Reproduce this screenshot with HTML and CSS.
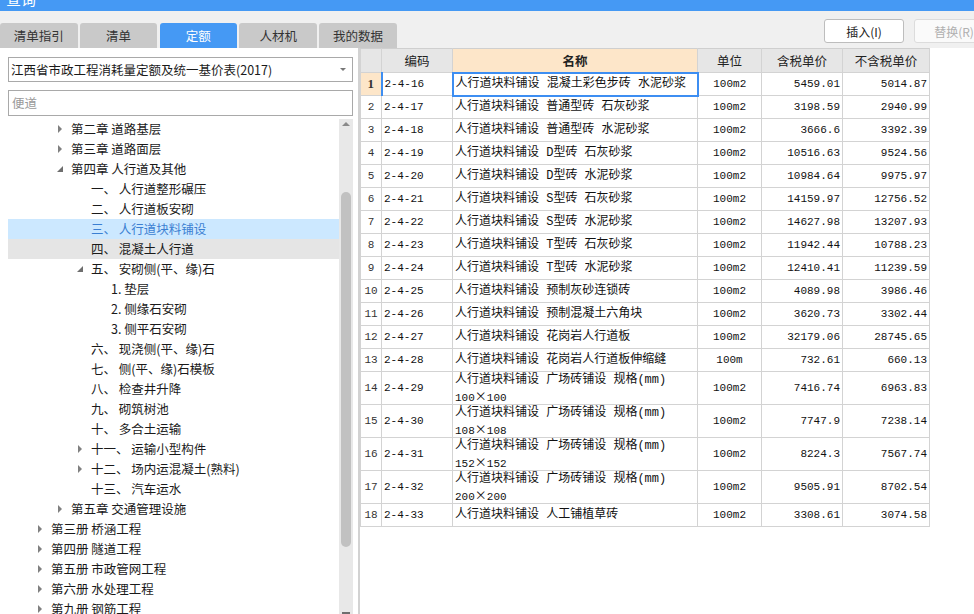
FILE: index.html
```html
<!DOCTYPE html>
<html lang="zh-CN">
<head>
<meta charset="utf-8">
<title>查询</title>
<link rel="stylesheet" href="styles.css">
</head>
<body>
<div class="app">
  <div class="titlebar"><span class="title">查询</span></div>
  <div class="toolbar">
    <div class="tabs">
      <div class="tab">清单指引</div>
      <div class="tab">清单</div>
      <div class="tab active">定额</div>
      <div class="tab">人材机</div>
      <div class="tab">我的数据</div>
    </div>
    <div class="actions">
      <button class="btn">插入(I)</button>
      <button class="btn disabled">替换(R)</button>
    </div>
  </div>
  <div class="main">
    <div class="left">
      <div class="select">
        <span class="select-text">江西省市政工程消耗量定额及统一基价表(2017)</span>
        <span class="caret"></span>
      </div>
      <div class="search">便道</div>
      <div class="treewrap">
        <div class="tree">
          <div class="node l2"><span class="tg closed"></span>第二章 道路基层</div>
          <div class="node l2"><span class="tg closed"></span>第三章 道路面层</div>
          <div class="node l2"><span class="tg open"></span>第四章 人行道及其他</div>
          <div class="node l3"><span class="tg"></span>一、 人行道整形碾压</div>
          <div class="node l3"><span class="tg"></span>二、 人行道板安砌</div>
          <div class="node l3 selected"><span class="tg"></span>三、 人行道块料铺设</div>
          <div class="node l3 hover"><span class="tg"></span>四、 混凝土人行道</div>
          <div class="node l3"><span class="tg open"></span>五、 安砌侧(平、缘)石</div>
          <div class="node l4"><span class="tg"></span>1. 垫层</div>
          <div class="node l4"><span class="tg"></span>2. 侧缘石安砌</div>
          <div class="node l4"><span class="tg"></span>3. 侧平石安砌</div>
          <div class="node l3"><span class="tg"></span>六、 现浇侧(平、缘)石</div>
          <div class="node l3"><span class="tg"></span>七、 侧(平、缘)石模板</div>
          <div class="node l3"><span class="tg"></span>八、 检查井升降</div>
          <div class="node l3"><span class="tg"></span>九、 砌筑树池</div>
          <div class="node l3"><span class="tg"></span>十、 多合土运输</div>
          <div class="node l3"><span class="tg closed"></span>十一、 运输小型构件</div>
          <div class="node l3"><span class="tg closed"></span>十二、 场内运混凝土(熟料)</div>
          <div class="node l3"><span class="tg"></span>十三、 汽车运水</div>
          <div class="node l2"><span class="tg closed"></span>第五章 交通管理设施</div>
          <div class="node l1"><span class="tg closed"></span>第三册 桥涵工程</div>
          <div class="node l1"><span class="tg closed"></span>第四册 隧道工程</div>
          <div class="node l1"><span class="tg closed"></span>第五册 市政管网工程</div>
          <div class="node l1"><span class="tg closed"></span>第六册 水处理工程</div>
          <div class="node l1"><span class="tg closed"></span>第九册 钢筋工程</div>
        </div>
        <div class="scrollbar">
          <div class="sb-up"><span class="up-arrow"></span></div>
          <div class="sb-thumb"></div>
          <div class="sb-down"></div>
        </div>
      </div>
    </div>
    <div class="right">
      <table class="grid">
        <colgroup>
          <col class="c-no"><col class="c-code"><col class="c-name"><col class="c-unit"><col class="c-p1"><col class="c-p2">
        </colgroup>
        <thead>
          <tr>
            <th></th><th>编码</th><th class="h-name">名称</th><th>单位</th><th>含税单价</th><th>不含税单价</th>
          </tr>
        </thead>
        <tbody>
          <tr class="cur"><td class="no">1</td><td class="code">2-4-16</td><td class="name">人行道块料铺设 混凝土彩色步砖 水泥砂浆</td><td class="unit">100m2</td><td class="num">5459.01</td><td class="num">5014.87</td></tr>
          <tr><td class="no">2</td><td class="code">2-4-17</td><td class="name">人行道块料铺设 普通型砖 石灰砂浆</td><td class="unit">100m2</td><td class="num">3198.59</td><td class="num">2940.99</td></tr>
          <tr><td class="no">3</td><td class="code">2-4-18</td><td class="name">人行道块料铺设 普通型砖 水泥砂浆</td><td class="unit">100m2</td><td class="num">3666.6</td><td class="num">3392.39</td></tr>
          <tr><td class="no">4</td><td class="code">2-4-19</td><td class="name">人行道块料铺设 D型砖 石灰砂浆</td><td class="unit">100m2</td><td class="num">10516.63</td><td class="num">9524.56</td></tr>
          <tr><td class="no">5</td><td class="code">2-4-20</td><td class="name">人行道块料铺设 D型砖 水泥砂浆</td><td class="unit">100m2</td><td class="num">10984.64</td><td class="num">9975.97</td></tr>
          <tr><td class="no">6</td><td class="code">2-4-21</td><td class="name">人行道块料铺设 S型砖 石灰砂浆</td><td class="unit">100m2</td><td class="num">14159.97</td><td class="num">12756.52</td></tr>
          <tr><td class="no">7</td><td class="code">2-4-22</td><td class="name">人行道块料铺设 S型砖 水泥砂浆</td><td class="unit">100m2</td><td class="num">14627.98</td><td class="num">13207.93</td></tr>
          <tr><td class="no">8</td><td class="code">2-4-23</td><td class="name">人行道块料铺设 T型砖 石灰砂浆</td><td class="unit">100m2</td><td class="num">11942.44</td><td class="num">10788.23</td></tr>
          <tr><td class="no">9</td><td class="code">2-4-24</td><td class="name">人行道块料铺设 T型砖 水泥砂浆</td><td class="unit">100m2</td><td class="num">12410.41</td><td class="num">11239.59</td></tr>
          <tr><td class="no">10</td><td class="code">2-4-25</td><td class="name">人行道块料铺设 预制灰砂连锁砖</td><td class="unit">100m2</td><td class="num">4089.98</td><td class="num">3986.46</td></tr>
          <tr><td class="no">11</td><td class="code">2-4-26</td><td class="name">人行道块料铺设 预制混凝土六角块</td><td class="unit">100m2</td><td class="num">3620.73</td><td class="num">3302.44</td></tr>
          <tr><td class="no">12</td><td class="code">2-4-27</td><td class="name">人行道块料铺设 花岗岩人行道板</td><td class="unit">100m2</td><td class="num">32179.06</td><td class="num">28745.65</td></tr>
          <tr><td class="no">13</td><td class="code">2-4-28</td><td class="name">人行道块料铺设 花岗岩人行道板伸缩缝</td><td class="unit">100m</td><td class="num">732.61</td><td class="num">660.13</td></tr>
          <tr class="tall"><td class="no">14</td><td class="code">2-4-29</td><td class="name"><span class="ln">人行道块料铺设 广场砖铺设 规格(mm)</span><span class="ln dim">100<span class="times">×</span>100</span></td><td class="unit">100m2</td><td class="num">7416.74</td><td class="num">6963.83</td></tr>
          <tr class="tall"><td class="no">15</td><td class="code">2-4-30</td><td class="name"><span class="ln">人行道块料铺设 广场砖铺设 规格(mm)</span><span class="ln dim">108<span class="times">×</span>108</span></td><td class="unit">100m2</td><td class="num">7747.9</td><td class="num">7238.14</td></tr>
          <tr class="tall"><td class="no">16</td><td class="code">2-4-31</td><td class="name"><span class="ln">人行道块料铺设 广场砖铺设 规格(mm)</span><span class="ln dim">152<span class="times">×</span>152</span></td><td class="unit">100m2</td><td class="num">8224.3</td><td class="num">7567.74</td></tr>
          <tr class="tall"><td class="no">17</td><td class="code">2-4-32</td><td class="name"><span class="ln">人行道块料铺设 广场砖铺设 规格(mm)</span><span class="ln dim">200<span class="times">×</span>200</span></td><td class="unit">100m2</td><td class="num">9505.91</td><td class="num">8702.54</td></tr>
          <tr><td class="no">18</td><td class="code">2-4-33</td><td class="name">人行道块料铺设 人工铺植草砖</td><td class="unit">100m2</td><td class="num">3308.61</td><td class="num">3074.58</td></tr>
        </tbody>
      </table>
    </div>
  </div>
</div>
</body>
</html>
```

FILE: styles.css
```css
* { box-sizing: border-box; }
html, body { margin: 0; padding: 0; }
body {
  width: 974px;
  height: 614px;
  overflow: hidden;
  background: #ffffff;
  font-family: "Noto Sans CJK SC", "Microsoft YaHei", sans-serif;
  font-size: 12px;
  color: #222;
}
.app { display: flex; flex-direction: column; height: 614px; }

.titlebar {
  height: 11px;
  background: #4599f4;
  overflow: hidden;
  flex: 0 0 11px;
}
.title {
  display: block;
  margin-top: -10px;
  margin-left: 6px;
  color: #fff;
  font-size: 15px;
  line-height: 18px;
}

.toolbar {
  flex: 0 0 37px;
  height: 37px;
  background: #f0f0f0;
  display: flex;
  overflow: hidden;
}
.tabs {
  display: flex;
  gap: 2.3px;
  align-self: flex-end;
}
.tab {
  width: 77.5px;
  height: 25px;
  line-height: 25px;
  text-align: center;
  background: #c9c9c9;
  color: #333;
  border-radius: 3px 3px 0 0;
  font-size: 12.5px;
}
.tab.active { background: #4599f4; color: #fff; }

.actions {
  margin-left: auto;
  margin-right: -20px;
  padding-top: 8px;
  display: flex;
  gap: 10px;
}
.btn {
  width: 80px;
  height: 24px;
  background: #fff;
  border: 1px solid #bdbdbd;
  border-radius: 3px;
  font-family: "Noto Sans CJK SC", sans-serif;
  font-size: 12px;
  color: #222;
  padding: 0;
}
.btn.disabled { color: #b0b0b0; border-color: #dcdcdc; background: #fafafa; }

.main {
  flex: 1;
  display: flex;
  min-height: 0;
}
.left {
  width: 360px;
  flex: 0 0 360px;
  background: #fff;
  border-right: 2px solid #d2d2d2;
  padding: 9px 0 0 8px;
  display: flex;
  flex-direction: column;
}
.select {
  width: 345px;
  height: 25px;
  border: 1px solid #a9a9a9;
  display: flex;
  align-items: center;
  padding-left: 2px;
  color: #1a1a1a;
  font-size: 12.5px;
}
.select-text { flex: 1; }
.caret {
  width: 0; height: 0;
  border-left: 3px solid transparent;
  border-right: 3px solid transparent;
  border-top: 3px solid #777;
  margin-right: 6px;
}
.search {
  margin-top: 8px;
  width: 345px;
  height: 26px;
  border: 1px solid #a9a9a9;
  line-height: 24px;
  padding-left: 3px;
  color: #9a9a9a;
  font-size: 12.5px;
}
.treewrap {
  margin-top: 3px;
  flex: 1;
  display: flex;
  min-height: 0;
  overflow: hidden;
}
.tree { width: 331px; flex: 0 0 331px; }
.node {
  height: 20px;
  line-height: 20px;
  white-space: nowrap;
  color: #1a1a1a;
  font-size: 12.5px;
  display: flex;
  align-items: center;
}
.node.l1 { padding-left: 29px; }
.node.l2 { padding-left: 49px; }
.node.l3 { padding-left: 69px; }
.node.l4 { padding-left: 89px; }
.node.selected { background: #cce8ff; color: #3b7fd2; }
.node.hover { background: #e5e5e5; }
.tg {
  width: 14px;
  flex: 0 0 14px;
  height: 20px;
  position: relative;
}
.tg.closed::before {
  content: "";
  position: absolute;
  left: 1px; top: 6px;
  border-left: 4px solid #808080;
  border-top: 4px solid transparent;
  border-bottom: 4px solid transparent;
}
.tg.open::before {
  content: "";
  position: absolute;
  left: 0; top: 7px;
  border-right: 6px solid #6e6e6e;
  border-top: 6px solid transparent;
}

.scrollbar {
  width: 14px;
  flex: 0 0 14px;
  background: #e8e8e8;
  display: flex;
  flex-direction: column;
  align-items: center;
}
.sb-up { height: 16px; width: 14px; display: flex; justify-content: center; padding-top: 3px; }
.up-arrow {
  width: 0; height: 0;
  border-left: 4px solid transparent;
  border-right: 4px solid transparent;
  border-bottom: 4px solid #8a8a8a;
}
.sb-thumb {
  margin-top: 57px;
  width: 10px;
  height: 355px;
  background: #c1c1c1;
  border-radius: 5px;
}
.sb-down {
  margin-top: auto;
  width: 8px;
  height: 2px;
  background: #6e6e6e;
  margin-bottom: 0;
}

.right {
  flex: 1;
  background: #fff;
  overflow: hidden;
}
.grid {
  border-collapse: collapse;
  table-layout: fixed;
  width: 569px;
  margin-top: 0;
}
.c-no { width: 21px; }
.c-code { width: 71px; }
.c-name { width: 245px; }
.c-unit { width: 64px; }
.c-p1 { width: 81px; }
.c-p2 { width: 87px; }

.grid th, .grid td {
  border: 1px solid #d3d3d3;
  padding: 0;
}
.grid th {
  height: 24px;
  background: #e6e6e6;
  font-weight: normal;
  font-size: 12.5px;
  color: #222;
  text-align: center;
  border-top-color: #cfcfcf;
}
.grid th.h-name { background: #fde6c9; font-weight: bold; }
.grid td { height: 23px; vertical-align: middle; }
.grid tr.tall td { height: 33px; }

.grid td.no {
  text-align: center;
  font-family: "Liberation Mono", monospace;
  font-size: 11px;
  color: #333;
  background: #fff;
}
.grid tr.cur td.no { background: #fde6c9; font-weight: bold; font-family: "Liberation Serif", serif; font-size: 13px; }
.grid tr.cur td.code { border-left: 2px solid #3d8ef2; }
.grid tr.cur td.name { border: 2px solid #3d8ef2; }

.grid td.code {
  font-family: "Liberation Mono", monospace;
  font-size: 11px;
  padding-left: 2px;
  color: #111;
}
.grid td.name {
  font-family: "Liberation Mono", "Noto Sans CJK SC", monospace;
  font-size: 12px;
  line-height: 15px;
  padding-left: 2px;
  color: #111;
  white-space: nowrap;
  overflow: hidden;
}
.grid td.name .ln { display: block; height: 15px; line-height: 15px; }
.grid td.name .dim { font-size: 11px; }
.grid td.name .times { font-family: "Noto Sans CJK SC", sans-serif; font-size: 12px; line-height: 15px; }
.grid td.unit {
  text-align: center;
  font-family: "Liberation Mono", monospace;
  font-size: 11px;
  color: #111;
}
.grid td.num {
  text-align: right;
  padding-right: 2px;
  font-family: "Liberation Mono", monospace;
  font-size: 11px;
  color: #111;
}
```
